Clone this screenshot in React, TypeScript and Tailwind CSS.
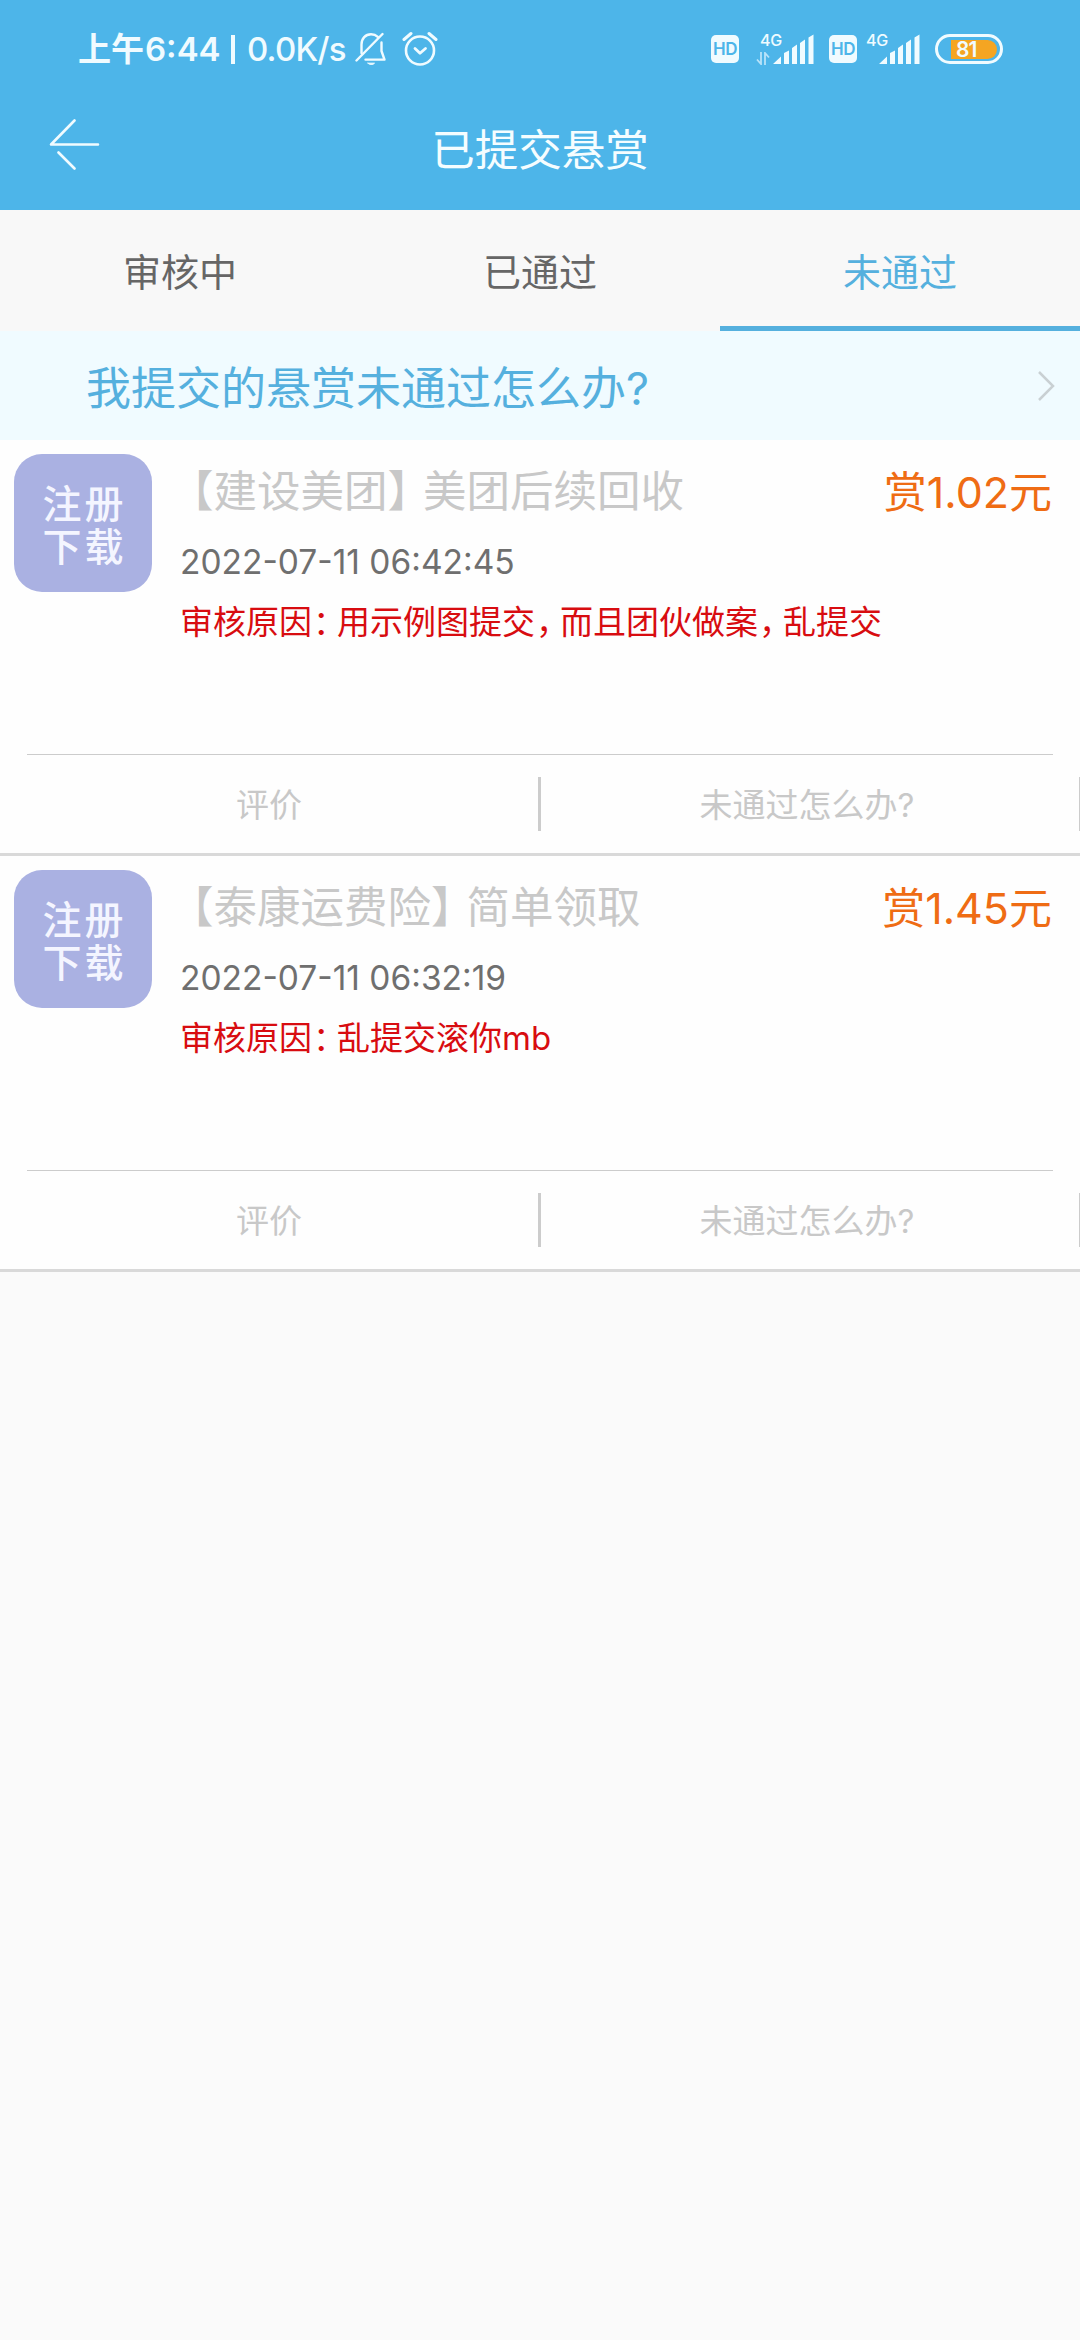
import { Fragment } from "react";

interface Reward {
  /** 标题中括号内的标签 */
  tag: string;
  title: string;
  price: string;
  date: string;
  time: string;
  /** 审核未通过的原因 */
  reason: string;
}

const tabs = ["审核中", "已通过", "未通过"];
const activeTab = 2;

const rewards: Reward[] = [
  {
    tag: "建设美团",
    title: "美团后续回收",
    price: "1.02",
    date: "2022-07-11",
    time: "06:42:45",
    reason: "用示例图提交，而且团伙做案，乱提交",
  },
  {
    tag: "泰康运费险",
    title: "简单领取",
    price: "1.45",
    date: "2022-07-11",
    time: "06:32:19",
    reason: "乱提交滚你mb",
  },
];

/** 静音图标 */
function BellOffIcon() {
  return (
    <svg width="32" height="34" viewBox="0 0 32 34" fill="none" stroke="#f0fbff" strokeWidth="2.4" strokeLinecap="round" strokeLinejoin="round">
      <path d="M6.5 21V12.5C6.5 6.5 10.5 2.2 16 2.2c2.8 0 5 .9 6.8 2.6" />
      <path d="M26.5 10.5V19l3 8.6H10.500" />
      <path d="M1.500 28.500 27.500 2" />
      <path d="M13 31.200h6.500c-1.500 1.800-5 1.800-6.500 0Z" fill="#f0fbff" strokeWidth="1" />
    </svg>
  );
}

/** 闹钟图标 */
function AlarmIcon() {
  return (
    <svg width="36" height="36" viewBox="0 0 36 36" fill="none" stroke="#f0fbff" strokeLinecap="round" strokeLinejoin="round">
      <circle cx="18" cy="19.500" r="14" strokeWidth="2.600" />
      <path d="m13 17.500 5 4.800 5.500-4.800" strokeWidth="2.800" />
      <path d="M2 8.500 9 2.500M27 2.500l7 6" strokeWidth="3" />
    </svg>
  );
}

function HdBadge() {
  return (
    <span className="flex h-7 w-7 items-center justify-center rounded-[5px] bg-[#f0fbff] text-[17px] leading-none font-semibold tracking-[-0.5px] text-[#4db5e9]">
      HD
    </span>
  );
}

/** 信号强度，busy 时显示上下行箭头 */
function Signal({ busy = false }: { busy?: boolean }) {
  return (
    <span className="flex h-8 items-start">
      <span className="flex w-[22px] flex-col">
        <span className="h-[19px] text-[16px] leading-[14px] font-medium tracking-[-0.3px]">4G</span>
        {busy && (
          <svg className="-ml-1" width="14" height="13" viewBox="0 0 14 13" fill="none" stroke="#b9e3f9" strokeWidth="1.800">
            <path d="M5 0v12L1 7.500M9 13V1l4 4.500" />
          </svg>
        )}
      </span>
      <svg className="-ml-[9px]" width="41" height="32" viewBox="0 0 41 32" fill="#f0fbff">
        <path d="M0 31 8 23.500V31ZM11 20l5-2.500V31h-5ZM19 15l5-3.500V31h-5ZM27 10l5-3.500V31h-5ZM35.500 4.500 40.500 1.500V31h-5Z" />
      </svg>
    </span>
  );
}

function Battery() {
  return (
    <span className="flex h-[30px] w-[68px] items-center rounded-full border-[3px] border-[#f0fbff] pl-[13px]">
      <span className="flex h-[19px] w-[46px] items-center rounded-r-full bg-[#f5a522] pl-[5px] text-[21px] leading-none font-semibold tracking-[-1px]">
        81
      </span>
    </span>
  );
}

function StatusBar() {
  return (
    <div className="flex h-[98px] items-center pl-[78px] text-[#f0fbff]">
      <div className="flex items-center text-[33px] leading-none font-medium whitespace-pre">
        <span className="w-[67px] font-semibold">上午</span>
        <span className="w-[86px] font-semibold">6:44</span>
        <span className="h-[29px] w-1 bg-[#f0fbff]" />
        <span className="w-[120px] pl-[12px] tracking-[-0.8px]">0.0K/s</span>
      </div>
      <BellOffIcon />
      <span className="w-[15px]" />
      <AlarmIcon />
      <span className="w-[273px]" />
      <HdBadge />
      <span className="w-[21px]" />
      <Signal busy />
      <span className="w-[15px]" />
      <HdBadge />
      <span className="w-[9px]" />
      <Signal />
      <span className="w-[15px]" />
      <Battery />
    </div>
  );
}

function Header() {
  return (
    <header className="h-[210px] bg-[#4db5e9]">
      <StatusBar />
      <div className="grid h-[100px] grid-cols-3 items-center">
        <svg className="mb-2 ml-[48px]" width="52" height="52" viewBox="0 0 52 52" fill="none" stroke="#f0fbff" strokeWidth="2.600" strokeLinecap="round" strokeLinejoin="round">
          <path d="M50 26.500H3L26.500 2.500M10.500 34.500 26.500 50.500" />
        </svg>
        <h1 className="pt-[5px] text-center text-[43.500px] leading-none text-[#f5fdff]">已提交悬赏</h1>
      </div>
    </header>
  );
}

/** 全角标点收窄后的文本 */
function Compact({ text }: { text: string }) {
  return (
    <>
      {text.split(/([，：])/).map((part, i) => (
        <Fragment key={i}>
          {part === "，" || part === "：" ? <span className="pl-px tracking-[-9px]">{part}</span> : part}
        </Fragment>
      ))}
    </>
  );
}

function RewardCard({ reward }: { reward: Reward }) {
  return (
    <article className="h-[416px] border-b-3 border-[#d9d9d9] bg-[#fefefe]">
      <div className="flex h-[314px] pt-[14px] pl-[14px]">
        <div className="flex h-[138px] w-[138px] shrink-0 flex-col items-center justify-center rounded-[28px] bg-[#aab1e2] pt-[3px] pl-[3px] text-[39px] leading-[43px] font-medium tracking-[3px] text-[#f4f5ff]">
          <span>注册</span>
          <span>下载</span>
        </div>
        <div className="flex-1 pt-[14px] pl-[28px]">
          <div className="flex h-[48px] items-center justify-between pr-[28px]">
            <h2 className="text-[43.500px] leading-none whitespace-nowrap text-[#c8c8c8]">
              <span className="-ml-[10px]">【</span>
              {reward.tag}
              <span className="tracking-[-8px]">】</span>
              {reward.title}
            </h2>
            <span className="text-[43px] leading-none text-[#ef6c14]">赏{reward.price}元</span>
          </div>
          <p className="mt-[28px] h-[36px] text-[33.500px] leading-[36px] whitespace-pre text-[#6f6f6f]">
            {reward.date} {reward.time}
          </p>
          <p className="mt-[22px] h-[40px] text-[33px] leading-[40px] whitespace-nowrap text-[#d80c10]">
            <Compact text={`审核原因：${reward.reason}`} />
          </p>
        </div>
      </div>
      <div className="mx-[27px] h-px bg-[#cccccc]" />
      <div className="flex h-[98px] items-center overflow-hidden text-[33px] leading-none text-[#c8c8c8]">
        <span className="w-[538px] shrink-0 pt-[3px] text-center">评价</span>
        <span className="h-[54px] w-[3px] shrink-0 bg-[#cccccc]" />
        <span className="w-[538px] shrink-0 pt-[3px] pr-[6px] text-center">未通过怎么办?</span>
        <span className="h-[54px] w-[3px] shrink-0 bg-[#cccccc]" />
      </div>
    </article>
  );
}

export default function App() {
  return (
    <div className="h-[2340px] w-[1080px] overflow-hidden bg-[#fafafa] font-[Inter,'Noto_Sans_CJK_SC',sans-serif]">
      <Header />

      {/* 状态切换 */}
      <nav className="grid h-[121px] grid-cols-3 bg-[#f8f8f8] text-[38px]">
        {tabs.map((tab, i) => (
          <span
            key={tab}
            className={`flex items-center justify-center border-b-5 pt-2 ${
              i === activeTab ? "border-[#55b0de] text-[#55b0de]" : "border-transparent text-[#666666]"
            }`}
          >
            {tab}
          </span>
        ))}
      </nav>

      {/* 帮助入口 */}
      <div className="flex h-[109px] items-center justify-between bg-[#f0fbff] pr-[25px] pl-[86px] text-[#55b0de]">
        <span className="pt-[6px] text-[45px] leading-none">我提交的悬赏未通过怎么办?</span>
        <svg width="18" height="30" viewBox="0 0 18 30" fill="none" stroke="#c9d0d3" strokeWidth="2.500">
          <path d="m2 1 14 14L2 29" />
        </svg>
      </div>

      {rewards.map((reward) => (
        <RewardCard key={reward.time} reward={reward} />
      ))}
    </div>
  );
}
